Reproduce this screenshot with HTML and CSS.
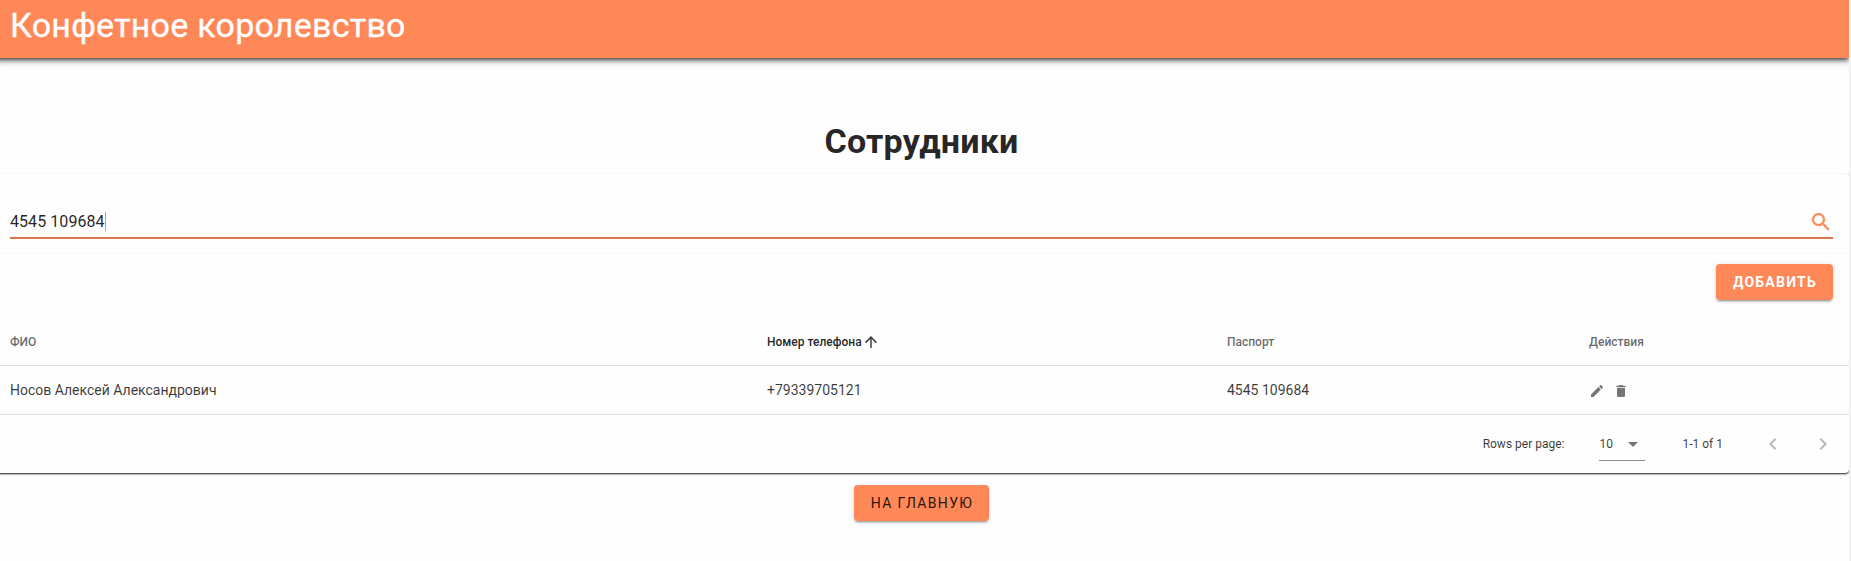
FILE: index.html
```
<!DOCTYPE html>
<html lang="ru">
<head>
<meta charset="utf-8">
<title>Конфетное королевство</title>
<link rel="stylesheet" href="styles.css">
</head>
<body>
<div class="app">
  <header class="bar"><span class="bar-title">Конфетное королевство</span></header>
  <main>
    <h1 class="heading"><span>Сотрудники</span></h1>
    <section class="card">
      <div class="search-row">
        <div class="field">
          <span class="field-text">4545 109684</span><span class="caret"></span>
          <svg class="search-icon" viewBox="0 0 24 24"><path d="M9.5,3A6.5,6.5 0 0,1 16,9.5C16,11.11 15.41,12.59 14.44,13.73L14.71,14H15.5L20.5,19L19,20.5L14,15.5V14.71L13.73,14.44C12.59,15.41 11.11,16 9.5,16A6.5,6.5 0 0,1 3,9.5A6.5,6.5 0 0,1 9.5,3M9.5,5C7,5 5,7 5,9.5C5,12 7,14 9.5,14C12,14 14,12 14,9.5C14,7 12,5 9.5,5Z"/></svg>
        </div>
      </div>
      <div class="add-row"><button class="btn btn-add"><span>ДОБАВИТЬ</span></button></div>
      <div class="grid grid-head">
        <div><span class="w-fio">ФИО</span></div>
        <div class="sorted"><span>Номер телефона</span><svg class="sort-icon" viewBox="0 0 24 24"><path d="M13,20H11V8L5.5,13.5L4.08,12.08L12,4.16L19.92,12.08L18.5,13.5L13,8V20Z"/></svg></div>
        <div><span>Паспорт</span></div>
        <div><span>Действия</span></div>
      </div>
      <div class="grid grid-row">
        <div><span>Носов Алексей Александрович</span></div>
        <div><span>+79339705121</span></div>
        <div><span>4545 109684</span></div>
        <div class="actions">
          <svg viewBox="0 0 24 24"><path d="M20.71,7.04C21.1,6.65 21.1,6 20.71,5.63L18.37,3.29C18,2.9 17.35,2.9 16.96,3.29L15.12,5.12L18.87,8.87M3,17.25V21H6.75L17.81,9.93L14.06,6.18L3,17.25Z"/></svg>
          <svg viewBox="0 0 24 24"><path d="M19,4H15.5L14.5,3H9.5L8.5,4H5V6H19M6,19A2,2 0 0,0 8,21H16A2,2 0 0,0 18,19V7H6V19Z"/></svg>
        </div>
      </div>
      <footer class="pager">
        <span class="pager-label">Rows per page:</span>
        <div class="select"><span>10</span><svg viewBox="0 0 24 24"><path d="M7,10L12,15L17,10H7Z"/></svg></div>
        <span class="range">1-1 of 1</span>
        <svg class="nav" viewBox="0 0 24 24"><path d="M15.41,16.58L10.83,12L15.41,7.41L14,6L8,12L14,18L15.41,16.58Z"/></svg>
        <svg class="nav" viewBox="0 0 24 24"><path d="M8.59,16.58L13.17,12L8.59,7.41L10,6L16,12L10,18L8.59,16.58Z"/></svg>
      </footer>
    </section>
    <div class="home-row"><button class="btn btn-home"><span>НА ГЛАВНУЮ</span></button></div>
  </main>
</div>
</body>
</html>
```
FILE: styles.css
```
* { box-sizing: border-box; }
body {
  margin: 0;
  background: #f1f1f1;
  font-family: Roboto, sans-serif;
  color: rgba(0, 0, 0, 0.87);
  overflow: hidden;
}
svg { display: block; fill: currentColor; flex: none; }
.app {
  width: 1855px;
  height: 561px;
  margin-left: -6px;
  background: #fefefe;
  overflow: hidden;
}
.bar {
  height: 58px;
  padding: 5px 16px 0;
  background: #ff8859;
  color: #fff;
  font-size: 34px;
  line-height: 40px;
  letter-spacing: 0.25px;
  -webkit-text-stroke: 0.3px #fff;
  box-shadow: 0 2px 4px -1px rgba(0, 0, 0, 0.7), 0 4px 5px rgba(0, 0, 0, 0.25), 0 1px 10px rgba(0, 0, 0, 0.12);
}
.heading {
  margin: 0;
  height: 115px;
  padding-top: 63px;
  text-align: center;
  font-size: 34px;
  line-height: 40px;
  font-weight: 700;
  letter-spacing: 0.25px;
}
.card {
  height: 300px;
  border-radius: 4px;
  background: #fefefe;
  box-shadow: 0 1px 2px rgba(0, 0, 0, 0.9), 0 0 3px rgba(0, 0, 0, 0.05);
  clip-path: inset(0 0 -5px 0);
}
.search-row {
  height: 81px;
  padding: 30px 16px 0;
  border-top: 1px solid #f7f7f7;
  border-bottom: 1px solid #f7f7f7;
  border-radius: 4px;
}
.field {
  display: flex;
  align-items: center;
  height: 35px;
  padding-top: 2px;
  border-bottom: 2px solid #d9734b;
  font-size: 16px;
}
.field-text { letter-spacing: 0.07px; }
.caret { width: 1px; height: 19px; background: #ff8859; }
.search-icon { width: 24px; height: 24px; margin-left: auto; color: #ff8859; stroke: #ff8859; stroke-width: 0.3; }
.add-row { display: flex; justify-content: flex-end; height: 64px; padding: 10px 16px 0 0; }
.btn {
  height: 36px;
  padding: 0 0 0 1px;
  border: 0;
  border-radius: 4px;
  background: #ff8859;
  font: 500 14px/36px Roboto, sans-serif;
  letter-spacing: 1.25px;
  box-shadow: 0 3px 1px -2px rgba(0, 0, 0, 0.2), 0 2px 2px rgba(0, 0, 0, 0.14), 0 1px 5px rgba(0, 0, 0, 0.12);
}
.btn-add { width: 117px; color: #fff; font-weight: 700; }
.btn-home { width: 135px; color: rgba(0, 0, 0, 0.87); font-weight: 400; letter-spacing: 1.35px; }
.grid {
  display: grid;
  grid-template-columns: 757px 460px 362px 1fr;
  align-items: center;
  padding-left: 16px;
  border-bottom: 1px solid #dedede;
}
.grid-head { height: 48px; padding-top: 1px; font-size: 12px; font-weight: 500; color: rgba(0, 0, 0, 0.6); }
.grid-row { height: 49px; font-size: 14px; color: rgba(0, 0, 0, 0.78); }
.sorted { display: flex; align-items: center; color: rgba(0, 0, 0, 0.87); }
.sort-icon { width: 18px; height: 18px; color: rgba(0, 0, 0, 0.75); }
.actions { display: flex; gap: 8px; padding-top: 2px; color: #757575; }
.actions svg { width: 16px; height: 16px; }
.pager { display: flex; align-items: center; justify-content: flex-end; height: 58px; padding-right: 14px; font-size: 12px; color: rgba(0, 0, 0, 0.78); }
.select {
  display: flex;
  align-items: center;
  justify-content: space-between;
  width: 46px;
  height: 33px;
  margin: 0 37px 0 35px;
  border-bottom: 1px solid #8c8c8c;
}
.select svg { width: 24px; height: 24px; color: #757575; }
.range { margin-right: 38px; }
.nav { width: 24px; height: 24px; color: #b8b8b8; }
.nav + .nav { margin-left: 26px; }
.home-row { display: flex; justify-content: center; padding-top: 12px; }
```
